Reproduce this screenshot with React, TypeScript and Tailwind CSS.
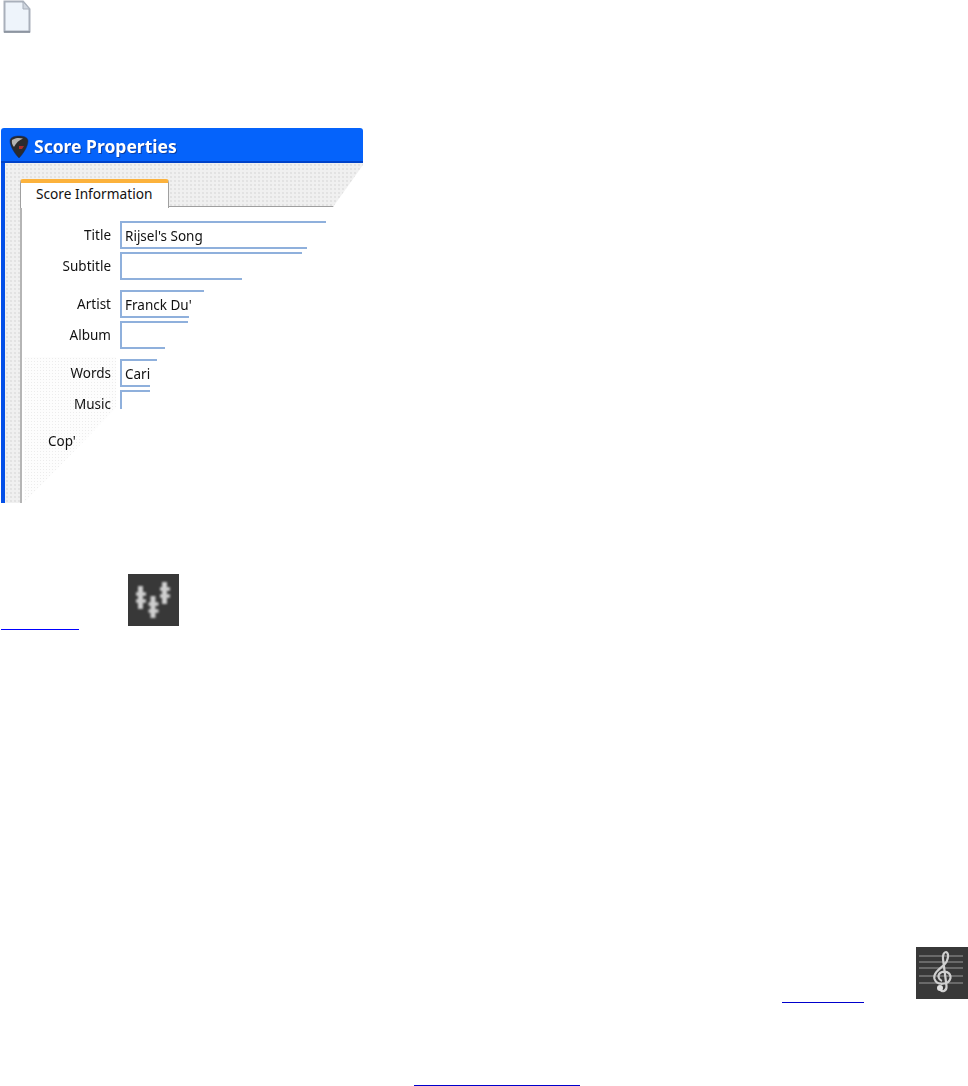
import React from 'react';

const fieldLine = 'bg-[#8fb0dc]';

// one blue text field of the clipped window: only top, left and bottom edges are left
function Field({ top, bottom, text, mt }: { top: number; bottom: number; text?: string; mt: string }) {
  return (
    <div className={`relative h-[27px] ${mt}`}>
      <div className={`h-[2px] ${fieldLine}`} style={{ width: top }} />
      <div className={`h-[24px] w-[2px] ${fieldLine}`} />
      <div className={`h-[2px] ${fieldLine}`} style={{ width: bottom }} />
      {text && <span className="absolute left-[5px] top-[5px] whitespace-nowrap text-[13.5px] leading-[20px] text-[#111]">{text}</span>}
    </div>
  );
}

function Label({ children, mt }: { children: React.ReactNode; mt: string }) {
  return <div className={`h-[27px] pt-[4px] text-right text-[13.5px] leading-[20px] text-[#111] ${mt}`}>{children}</div>;
}

function DocIcon() {
  return (
    <svg width="28" height="33" viewBox="0 0 28 33" className="ml-[3px] block blur-[0.5px]">
      <path d="M1.5 1.5H20L26.5 9V31.5H1.5Z" fill="#eef4fb" stroke="#a9b0bb" strokeWidth="2" />
      <path d="M20 1.5V9H26.5Z" fill="#cfd6df" stroke="#a9b0bb" />
      <path d="M1 32H27" stroke="#858d99" strokeWidth="1.5" />
    </svg>
  );
}

function PickLogo() {
  return (
    <svg width="20" height="24" viewBox="0 0 20 24">
      <path d="M1 6C1 2 6 1 10 1C14 1 19 2 19 6C19 12 13 20 10 23C7 20 1 12 1 6Z" fill="#2b2b2d" stroke="#0b2a70" strokeWidth="0.5" />
      <path d="M3 5C6 2.5 11 2.5 14 3.5C10 5 7 8 5 12C3 10 2.5 7 3 5Z" fill="#b4b4b4" />
      <path d="M10 11H15L13 14H10Z" fill="#a82c2c" />
    </svg>
  );
}

function SharpsIcon() {
  return (
    <div className="ml-[49px] h-[52px] w-[51px] bg-[#383838]">
      <svg width="51" height="52" viewBox="0 0 51 52">
        <g stroke="#cfcfcf" fill="none" style={{ filter: 'blur(1.1px)' }}>
          <g strokeWidth="5">
            <path d="M12.5 12V35" />
            <path d="M25 22V44" />
            <path d="M36.5 8V30" />
          </g>
          <g strokeWidth="3.5">
            <path d="M8 20H18M8 27H18" />
            <path d="M20.5 30H30.5M20.5 37H30.5" />
            <path d="M32 15H42M32 22H42" />
          </g>
        </g>
      </svg>
    </div>
  );
}

function ClefIcon() {
  return (
    <div className="h-[52px] w-[52px] bg-[#383838]">
      <svg width="52" height="52" viewBox="0 0 52 52">
        <g stroke="#696969" strokeWidth="2.2" style={{ filter: 'blur(0.5px)' }}>
          <path d="M3 9H47M3 15H47M3 21H47M3 29H47M3 36H47" />
        </g>
        <g style={{ filter: 'blur(0.6px)' }}>
          <path
            d="M24 42C26 46 31 44 30.5 39L27 12C26.5 8 28 5 30 5C33 6 33 13 28 18C22 23 17 27 18.5 32C21 39 33 38 34.5 31C35 25 28 23 24 26C21 29 23 33 26 34"
            stroke="#cfcfcf"
            strokeWidth="2.2"
            fill="none"
          />
          <circle cx="24" cy="41" r="3" fill="#e0e0e0" />
        </g>
      </svg>
    </div>
  );
}

function ScoreWindow() {
  return (
    <div className="relative ml-[1px] h-[375px] w-[362px] overflow-hidden font-['Noto_Sans',sans-serif] blur-[0.35px]">
      {/* title bar */}
      <div className="flex h-[35px] items-center gap-[5px] rounded-t-[3px] border-b-2 border-[#0042c8] bg-[#0563fb] pl-[8px] pt-[4px]">
        <PickLogo />
        <span className="text-[17.5px] font-bold text-white [text-shadow:1px_1px_0_#0a3fa8]">Score Properties</span>
      </div>

      <div className="flex h-[340px] border-l-4 border-[#0450e8] bg-[#f0f0f0] bg-[radial-gradient(#d2d2d2_0.6px,transparent_0.8px)] bg-[length:4px_4px]">
        <div className="ml-[15px] mt-[16px] w-[344px]">
          {/* tab */}
          <div className="flex h-[28px] items-end">
            <div className="z-10 -mb-[1px] h-[29px] w-[149px] rounded-t-[3px] border-x border-[#a0a0a0] border-t-4 border-t-[#fcb23c] bg-white pl-[15px] text-[13.7px] leading-[21px] text-[#111]">
              Score Information
            </div>
            <div className="h-[1px] flex-1 bg-[#a0a0a0]" />
          </div>
          {/* page */}
          <div className="relative h-[296px] border-l-2 border-[#b5b5b5] bg-white pl-[26px] pt-[14px]">
            <div className="absolute bottom-0 left-[2px] h-[146px] w-[92px] bg-[#fdfdfd] bg-[radial-gradient(#ececec_0.7px,transparent_0.9px)] bg-[length:3px_3px] [clip-path:polygon(0_0,100%_0,100%_35%,0_100%)]" />
            <div className="relative flex">
              <div className="w-[63px]">
                <Label mt="mt-0">Title</Label>
                <Label mt="mt-[4px]">Subtitle</Label>
                <Label mt="mt-[11px]">Artist</Label>
                <Label mt="mt-[4px]">Album</Label>
                <Label mt="mt-[11px]">Words</Label>
                <Label mt="mt-[4px]">Music</Label>
                <div className="mt-[11px] h-[27px] pt-[3px] text-[13.5px] leading-[20px] text-[#111]">Cop'</div>
              </div>
              <div className="ml-[9px] flex-1">
                <Field top={206} bottom={187} text="Rijsel's Song" mt="mt-0" />
                <Field top={182} bottom={122} mt="mt-[4px]" />
                <Field top={84} bottom={69} text="Franck Du'" mt="mt-[11px]" />
                <Field top={68} bottom={45} mt="mt-[4px]" />
                <Field top={37} bottom={30} text="Cari" mt="mt-[11px]" />
                <div className="mt-[4px] h-[19px] w-[30px] border-l-2 border-t-2 border-[#8fb0dc]" />
              </div>
            </div>
          </div>
        </div>
      </div>

      {/* torn diagonal edge of the picture */}
      <div className="absolute right-0 top-[37px] h-[42px] w-[30px] bg-white [clip-path:polygon(100%_0,100%_100%,0_100%)]" />
    </div>
  );
}

export default function App() {
  return (
    <div className="h-[1086px] w-[968px] overflow-hidden bg-white">
      <DocIcon />
      <div className="mt-[95px]">
        <ScoreWindow />
      </div>

      <div className="mt-[71px] flex h-[56px] items-start">
        <a className="ml-[1px] mt-[55px] block h-[1px] w-[78px] bg-[#0000ff]" href="#" />
        <SharpsIcon />
      </div>

      <div className="mt-[317px] flex h-[56px] items-start justify-end">
        <a className="mr-[52px] mt-[55px] block h-[1px] w-[82px] bg-[#0000cc]" href="#" />
        <ClefIcon />
      </div>

      <a className="ml-[414px] mt-[82px] block h-[1px] w-[166px] bg-[#0000cc]" href="#" />
    </div>
  );
}
